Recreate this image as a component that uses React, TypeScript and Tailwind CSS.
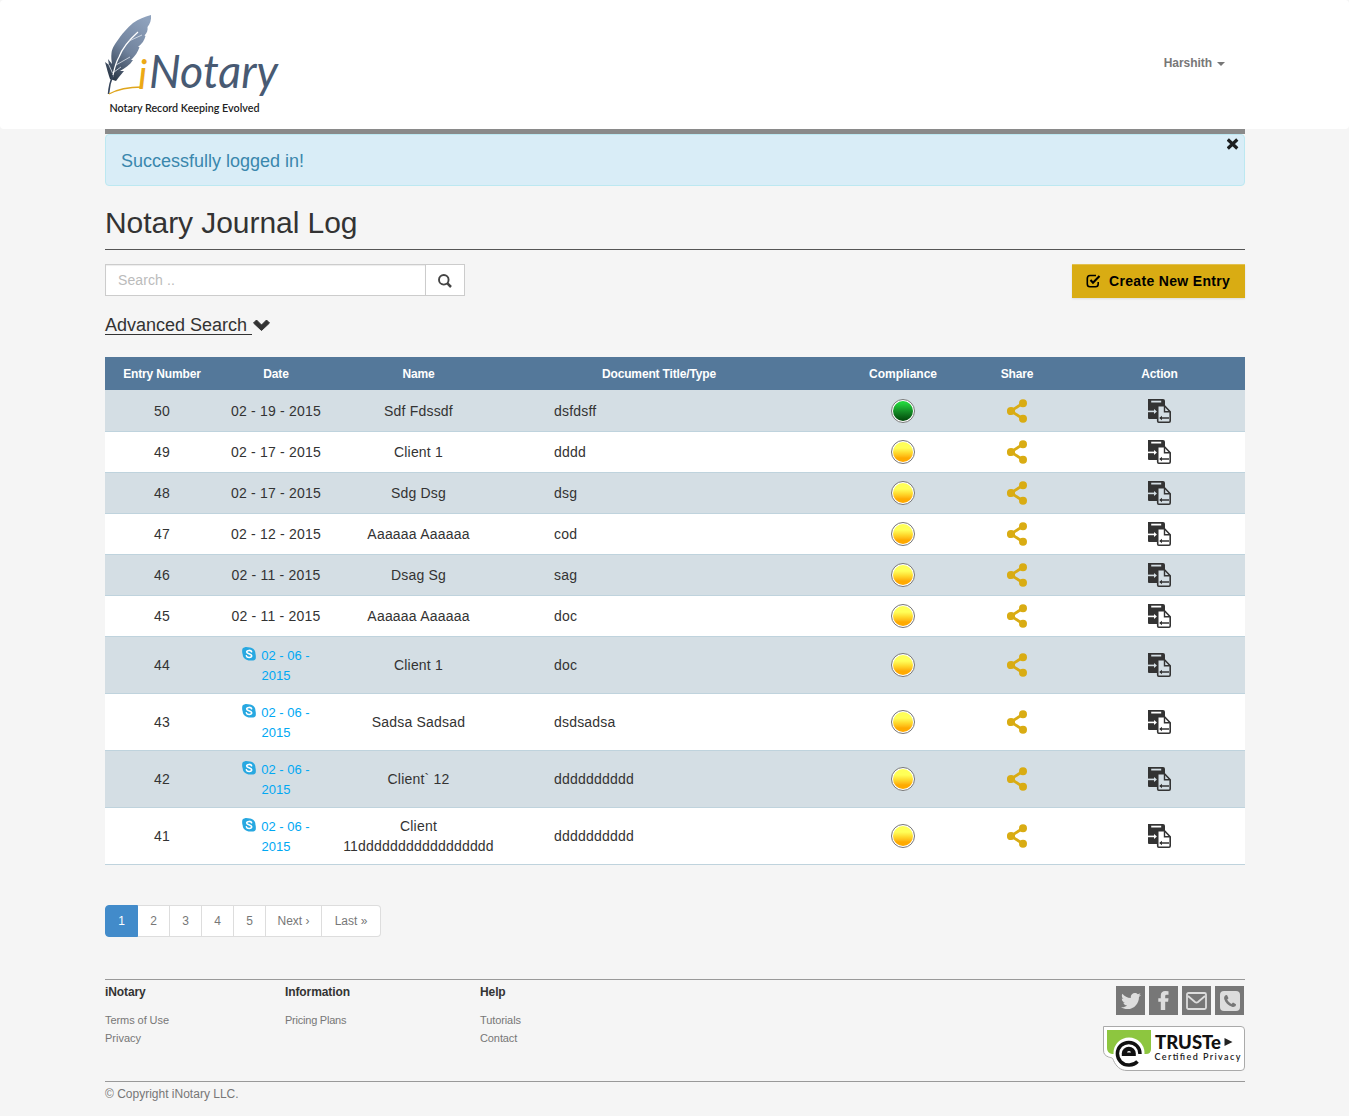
import React from 'react';
import { FaTwitter } from 'react-icons/fa';

type Entry = { id: number; date: string; name: string; doc: string; ok?: boolean; skype?: boolean };

const entries: Entry[] = [
  { id: 50, date: '02 - 19 - 2015', name: 'Sdf Fdssdf', doc: 'dsfdsff', ok: true },
  { id: 49, date: '02 - 17 - 2015', name: 'Client 1', doc: 'dddd' },
  { id: 48, date: '02 - 17 - 2015', name: 'Sdg Dsg', doc: 'dsg' },
  { id: 47, date: '02 - 12 - 2015', name: 'Aaaaaa Aaaaaa', doc: 'cod' },
  { id: 46, date: '02 - 11 - 2015', name: 'Dsag Sg', doc: 'sag' },
  { id: 45, date: '02 - 11 - 2015', name: 'Aaaaaa Aaaaaa', doc: 'doc' },
  { id: 44, date: '02 - 06 -', name: 'Client 1', doc: 'doc', skype: true },
  { id: 43, date: '02 - 06 -', name: 'Sadsa Sadsad', doc: 'dsdsadsa', skype: true },
  { id: 42, date: '02 - 06 -', name: 'Client` 12', doc: 'dddddddddd', skype: true },
  { id: 41, date: '02 - 06 -', name: 'Client 11ddddddddddddddddd', doc: 'dddddddddd', skype: true },
];

const columns = 'grid grid-cols-[114px_114px_171px_342px_114px_114px_171px]';

function Logo() {
  return (
    <svg width="180" height="105" viewBox="0 0 180 105" className="block">
      <defs>
        <linearGradient id="quill" x1="0.8" y1="0" x2="0.25" y2="1">
          <stop offset="0" stopColor="#8fa2bd" />
          <stop offset="0.55" stopColor="#71839d" />
          <stop offset="1" stopColor="#2d3a4b" />
        </linearGradient>
      </defs>
      <path d="M46 0C39 2 34 4 28 8C22 13 18 18 15 22C10 29 7 33 6.500 38C6 42 6.500 46 7 49L3 44L4 50L0 47C2 54 3 58 5 64L11 66L14 62L19 56L15 56C20 53 25 50 28 45L26 45C30 41 33 37 34.500 32L33 32C37 29 39.500 25 40.500 21L39.500 20.500C42 18 43 15 42.500 12C45 9 46.500 5 46 0Z" fill="url(#quill)" />
      <path d="M33 17C24 25 17 34 14 42C10 49 9 56 7.500 62" fill="none" stroke="#fff" strokeWidth="1.300" />
      <path d="M7.500 58L4 50M11 50L25 42M9 57L16 52M24 26L37 20" stroke="#dfe5ec" strokeWidth=".8" />
      <path d="M8 60C5 67 4 72 3.500 79" fill="none" stroke="#35445a" strokeWidth="1.500" />
      <path d="M4 79C13 74 24 72 37 72" fill="none" stroke="#dfa51c" strokeWidth="1.400" />
      <text x="33" y="73.500" fontFamily="Lato" fontSize="40" fontStyle="italic" fill="#eca915">i</text>
      <text x="44" y="73" fontFamily="Lato" fontSize="46" fontStyle="italic" fill="#485a73" textLength="129" lengthAdjust="spacingAndGlyphs">Notary</text>
      <text x="4.500" y="96.500" fontFamily="Lato" fontSize="11" fontWeight="600" fill="#222" textLength="150" lengthAdjust="spacingAndGlyphs">Notary Record Keeping Evolved</text>
    </svg>
  );
}

function SkypeIcon() {
  return (
    <svg width="14" height="14" viewBox="0 0 14 14" className="mr-[5px] inline-block align-[-1px]">
      <path d="M3 .2C5-.1 6.500.5 8 .5C11.400.9 13.600 3.600 13.400 6.600C13.900 8 14 10.600 13.600 12C12.600 13.600 10.400 13.800 8.600 13.400C4.600 13.700.8 11.200.7 7.400C0 6 0 3.400.4 1.800C1 .8 2 .3 3 .2Z" fill="#27a8e1" />
      <path d="M9.600 4.700C9.200 3 4.700 2.900 4.700 5C4.700 7.100 9.700 6.300 9.700 8.800C9.700 11 4.900 11 4.400 8.900" fill="none" stroke="#fff" strokeWidth="1.600" strokeLinecap="round" />
    </svg>
  );
}

function Light({ ok }: { ok?: boolean }) {
  return (
    <div className="flex size-6 items-center justify-center rounded-full border border-[#777] bg-white">
      <div
        className={
          ok
            ? 'size-5 rounded-full bg-linear-to-b from-[#22d53c] from-10% via-[#159027] to-[#03470a]'
            : 'size-5 rounded-full bg-linear-to-b from-[#ffff58] from-30% via-[#ffd92b] via-55% to-[#ffaa00] to-80%'
        }
      />
    </div>
  );
}

function ShareIcon() {
  return (
    <svg width="20" height="24" viewBox="0 0 20 24" fill="#d9ac13">
      <path d="M16 4.200L4 12L16 19.800" fill="none" stroke="#d9ac13" strokeWidth="2.800" />
      <circle cx="16" cy="4.200" r="4" />
      <circle cx="4" cy="12" r="4.100" />
      <circle cx="16" cy="19.800" r="4" />
    </svg>
  );
}

function ActionIcon({ tinted }: { tinted: boolean }) {
  const paper = tinted ? '#d4dee4' : '#fff';
  return (
    <svg width="23" height="24" viewBox="0 0 23 24">
      <path d="M0 0H15Q17 0 17 2V20H1Q0 20 0 19Z" fill="#333" />
      <path d="M3.200 2.600H13.200" stroke={paper} strokeWidth="1.800" />
      <path d="M0 12.400H7" stroke={paper} strokeWidth="1.600" />
      <path d="M6 10L9 12.400L6 15Z" fill={paper} />
      <path d="M9.700 7.500Q9.700 6.700 10.500 6.700H16.500L22.200 12.700V22Q22.200 23.200 21 23.200H10.700Q9.700 23.200 9.700 22Z" fill={paper} stroke="#333" strokeWidth="1.600" />
      <path d="M16.500 7V12.700H22M12 19H21" fill="none" stroke="#333" strokeWidth="1.400" />
      <path d="M14 16.800L11.200 19L14 21.200Z" fill="#333" />
    </svg>
  );
}

function FacebookIcon() {
  return (
    <svg width="21" height="21" viewBox="0 0 21 21" fill="currentColor">
      <path d="M15.500 1.200V4.800H13.500Q12.200 4.800 12.200 6V8.200H15.500L15.100 11.800H12.200V20H7.800V11.800H5.300V8.200H7.800V5.600Q7.800 1 12.400 1Q14.500 1 15.500 1.200Z" />
    </svg>
  );
}

function MailIcon() {
  return (
    <svg width="21" height="18" viewBox="0 0 21 18" fill="none" stroke="currentColor" strokeWidth="1.800">
      <rect x="1" y="1" width="19" height="16" rx="1.500" />
      <path d="M2 4L9 10Q10.500 11.200 12 10L19 4" />
    </svg>
  );
}

function PhoneIcon() {
  return (
    <svg width="20" height="20" viewBox="0 0 20 20">
      <rect width="20" height="20" rx="4" fill="currentColor" />
      <path d="M5.500 4.200L7 4L8.500 7.200L7.200 8.600C8.200 10.700 9.500 12 11.500 12.900L13 11.500L16 13.200L15.800 14.600C15 16 13.500 16.300 12 15.800C8 14.600 5.200 11.600 4.200 8C3.900 6.300 4.400 5 5.500 4.200Z" fill="#777" />
    </svg>
  );
}

function Truste() {
  return (
    <svg width="142" height="45" viewBox="0 0 142 45" className="block">
      <path d="M.5.5H138Q141.500.5 141.500 4V41Q141.500 44.500 138 44.500H24C17 44.500 13 40 10.500 34.500C9.500 31 8 32 5.500 31C2 29.500.5 28 .5 24Z" fill="#fff" stroke="#aaa" />
      <path d="M4 4H48V23Q48 28 43 28H9Q4 27 4 22Z" fill="#8dc63f" />
      <circle cx="26" cy="27" r="15.500" fill="#fff" />
      <path d="M37 28A11.300 11.300 0 1 0 25.700 39Q31 39.300 34.500 35.500" fill="none" stroke="#111" strokeWidth="3.500" />
      <path d="M18.800 30V27.500A7 6.800 0 0 1 32.800 27.500V30Z" fill="#111" />
      <path d="M24 26.500A2 1.500 0 0 1 28 26.500Z" fill="#fff" />
      <text x="52" y="22.500" fontFamily="Lato" fontWeight="900" fontSize="18" fill="#111" textLength="66" lengthAdjust="spacingAndGlyphs">TRUSTe</text>
      <path d="M121.500 12L129.500 16L121.500 20Z" fill="#222" />
      <text x="51.500" y="33.500" fontFamily="Lato" fontWeight="600" fontSize="9" fill="#222" textLength="86">Certified Privacy</text>
    </svg>
  );
}

const pages: [string, string][] = [
  ['2', 'w-8'], ['3', 'w-8'], ['4', 'w-8'], ['5', 'w-8'], ['Next ›', 'w-14'], ['Last »', 'w-[59px]'],
];

const tile = 'flex size-[29px] items-center justify-center bg-[#777] text-[#ddd]';
const footerHeading = 'mb-2.5 text-xs leading-[18px] font-bold tracking-[-0.1px] text-[#333]';

export default function App() {
  return (
    <div className="h-[1116px] overflow-hidden bg-[#f5f5f5] font-['Liberation_Sans',Arial,sans-serif] text-sm leading-5 text-[#333]">
      <header className="h-[129px] rounded bg-white">
        <div className="ml-[105px] flex w-[1140px] justify-between pt-[15px]">
          <Logo />
          <div className="mt-[38px] mr-5 flex h-5 items-center gap-[5px] text-xs font-bold tracking-[-0.05px] text-[#777]">
            Harshith
            <span className="mt-0.5 border-x-4 border-t-4 border-x-transparent border-t-[#777]" />
          </div>
        </div>
      </header>

      <main className="ml-[105px] w-[1140px]">
        <div className="h-[5px] bg-[#8a8a8a]" />
        <div className="flex h-[52px] justify-between rounded border border-[#bce8f1] bg-[#d9edf7] pr-[5px] pl-[15px]">
          <p className="mt-4 text-lg leading-5 text-[#3a87ad]">Successfully logged in!</p>
          <svg width="12" height="12" viewBox="0 0 12 12" className="mt-[3px]">
            <path d="M.8 1.500L10.300 10.500M10.300 1.500L.8 10.500" stroke="#1c1f20" strokeWidth="3.200" />
          </svg>
        </div>
        <h1 className="mt-[19px] h-[45px] border-b border-[#555] text-[30px] leading-9 tracking-[-0.06px]">Notary Journal Log</h1>

        <div className="mt-3.5 flex items-start justify-between">
          <div className="flex h-8 w-[360px] border border-[#ccc] bg-white">
            <div className="flex w-80 items-center border-r border-[#ccc] pl-3 tracking-[0.1px] text-[#bbb] shadow-[inset_0_1px_1px_rgba(0,0,0,0.075)]"><span>Search ..</span></div>
            <div className="flex flex-1 items-center justify-center pt-0.5">
              <svg width="14" height="14" viewBox="0 0 14 14" fill="none" stroke="#444">
                <circle cx="5.800" cy="5.800" r="4.800" strokeWidth="1.900" />
                <path d="M9.200 9.200L13 13" strokeWidth="2.500" />
              </svg>
            </div>
          </div>
          <button className="flex h-[34px] w-[173px] items-center bg-[#d9ac13] pl-3.5 text-sm font-bold tracking-[0.33px] whitespace-nowrap text-black shadow-[inset_0_1px_0_rgba(255,255,255,0.25),0_1px_2px_rgba(0,0,0,0.1)]">
            <svg width="15" height="14" viewBox="0 0 15 14" fill="none" stroke="#000" strokeWidth="1.600" className="mr-2">
              <path d="M10 1.500H4Q1.300 1.500 1.300 4.500V10Q1.300 12.700 4 12.700H9.500Q12.200 12.700 12.200 10V8" />
              <path d="M4.500 6L7 8.700L13.500 2" strokeWidth="2.100" />
            </svg>
            Create New Entry
          </button>
        </div>

        <div className="mt-[17px] flex h-[42px] items-start">
          <a className="h-[20px] border-b border-[#333] text-lg leading-5 whitespace-pre">Advanced Search </a>
          <svg width="18" height="12" viewBox="0 0 18 12" className="mt-1">
            <path d="M1.500 4L4.500 1L9.500 6L14.500 1L17.500 4L9.500 11.500Z" fill="#333" stroke="#333" strokeLinejoin="round" />
          </svg>
        </div>

        <section>
          <div className={`${columns} h-[33px] items-center bg-[#54789a] text-center text-xs font-bold tracking-[-0.15px] text-white`}>
            <span>Entry Number</span>
            <span>Date</span>
            <span>Name</span>
            <span className="pr-8">Document Title/Type</span>
            <span className="tracking-normal">Compliance</span>
            <span>Share</span>
            <span>Action</span>
          </div>
          {entries.map((e, i) => (
            <div
              key={e.id}
              className={`${columns} items-center border-b border-[#bfd3dd] text-center tracking-[0.2px] ${i % 2 ? 'bg-white' : 'bg-[#d4dee4]'} ${e.skype ? 'h-[57px]' : i ? 'h-[41px]' : 'h-[42px]'}`}
            >
              <span>{e.id}</span>
              {e.skype ? (
                <span className="pt-px text-[13px] tracking-normal text-[#00a8f3]">
                  <SkypeIcon />{e.date}<br />2015
                </span>
              ) : (
                <span>{e.date}</span>
              )}
              <span className="px-2">{e.name}</span>
              <span className="pl-[50px] text-left">{e.doc}</span>
              <span className="flex justify-center"><Light ok={e.ok} /></span>
              <span className="flex justify-center"><ShareIcon /></span>
              <span className="flex justify-center"><ActionIcon tinted={i % 2 === 0} /></span>
            </div>
          ))}
        </section>

        <nav className="mt-10 flex h-8 text-center text-xs leading-[30px] text-[#777]">
          <span className="w-[33px] rounded-l border border-[#428bca] bg-[#428bca] text-white">1</span>
          {pages.map(([label, width]) => (
            <span key={label} className={`${width} border-y border-r border-[#ddd] bg-white last:rounded-r`}>{label}</span>
          ))}
        </nav>
      </main>

      <footer className="mt-[42px] ml-[105px] w-[1140px] border-t border-[#999] text-[11px] leading-[18px] text-[#777]">
        <div className="flex h-[101px]">
          <div className="w-[180px] pt-[3px]">
            <h2 className={footerHeading}>iNotary</h2>
            <p className="tracking-[-0.07px]">Terms of Use</p>
            <p>Privacy</p>
          </div>
          <div className="w-[195px] pt-[3px]">
            <h2 className={footerHeading}>Information</h2>
            <p className="tracking-[-0.23px]">Pricing Plans</p>
          </div>
          <div className="flex-1 pt-[3px]">
            <h2 className={footerHeading}>Help</h2>
            <p className="tracking-[-0.1px]">Tutorials</p>
            <p className="tracking-[-0.1px]">Contact</p>
          </div>
          <div className="flex flex-col items-end gap-[11px] pt-1.5">
            <div className="mr-px flex gap-1">
              <span className={tile}><FaTwitter size={20} /></span>
              <span className={tile}><FacebookIcon /></span>
              <span className={tile}><MailIcon /></span>
              <span className={tile}><PhoneIcon /></span>
            </div>
            <Truste />
          </div>
        </div>
        <div className="border-t border-[#999] pt-[3px] text-xs leading-[18px]">© Copyright iNotary LLC.</div>
      </footer>
    </div>
  );
}
